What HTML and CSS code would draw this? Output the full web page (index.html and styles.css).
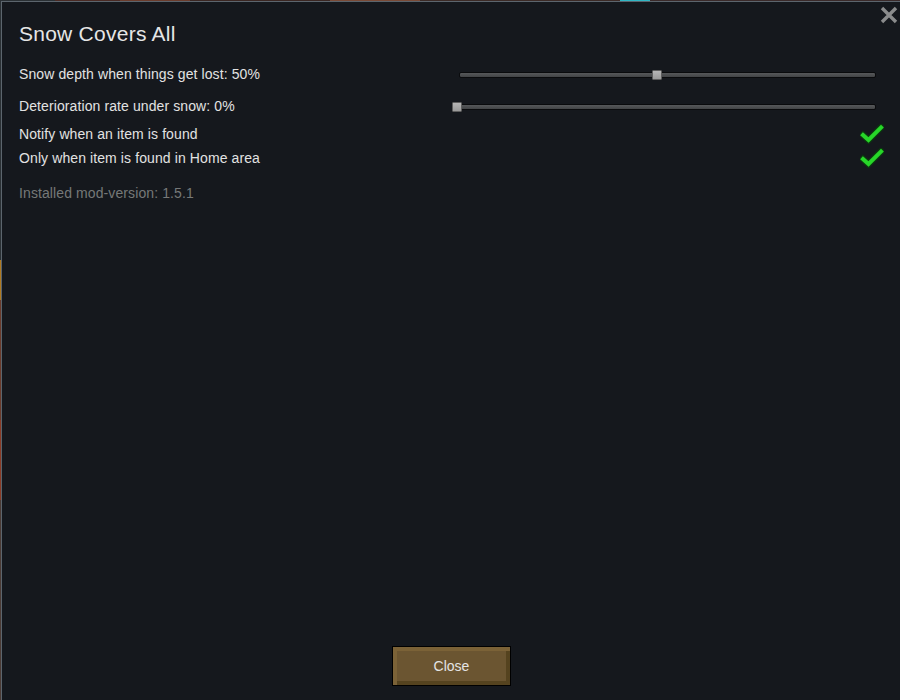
FILE: index.html
```html
<!DOCTYPE html>
<html lang="en">
<head>
<meta charset="utf-8">
<title>Mod settings</title>
<link rel="stylesheet" href="styles.css">
</head>
<body>
<div class="window">
  <button class="close-x" aria-label="Close">
    <svg width="18" height="18" viewBox="0 0 18 18"><path d="M2 2 L16 16 M16 2 L2 16" stroke="#8a8b8c" stroke-width="3.4" fill="none"/></svg>
  </button>

  <h1 class="title">Snow Covers All</h1>

  <div class="row">
    <span class="label">Snow depth when things get lost: 50%</span>
    <div class="slider">
      <div class="track"></div>
      <div class="thumb" style="left: 200px"></div>
    </div>
  </div>

  <div class="row">
    <span class="label">Deterioration rate under snow: 0%</span>
    <div class="slider">
      <div class="track"></div>
      <div class="thumb" style="left: 0px"></div>
    </div>
  </div>

  <div class="row row-check">
    <span class="label">Notify when an item is found</span>
    <svg class="check" width="24" height="20" viewBox="0 0 24 20">
      <polyline points="3,11 8.5,16 21,3.5" fill="none" stroke="#0b3a0e" stroke-width="6.5" stroke-linejoin="miter" stroke-linecap="square"/>
      <polyline points="3,11 8.5,16 21,3.5" fill="none" stroke="#27d629" stroke-width="4" stroke-linejoin="miter" stroke-linecap="square"/>
    </svg>
  </div>

  <div class="row row-check">
    <span class="label">Only when item is found in Home area</span>
    <svg class="check" width="24" height="20" viewBox="0 0 24 20">
      <polyline points="3,11 8.5,16 21,3.5" fill="none" stroke="#0b3a0e" stroke-width="6.5" stroke-linejoin="miter" stroke-linecap="square"/>
      <polyline points="3,11 8.5,16 21,3.5" fill="none" stroke="#27d629" stroke-width="4" stroke-linejoin="miter" stroke-linecap="square"/>
    </svg>
  </div>

  <p class="version">Installed mod-version: 1.5.1</p>

  <button class="btn-close">Close</button>
</div>
</body>
</html>
```

FILE: styles.css
```css
html, body {
  margin: 0;
  padding: 0;
}

body {
  width: 900px;
  height: 700px;
  overflow: hidden;
  background:
    linear-gradient(to right, #2a3034 0 55px, #4a2a24 55px 120px, #6b3c2c 120px 190px, #3a2622 190px 330px, #7a4a36 330px 420px, #3b2a26 420px 620px, #2fb7c4 620px 650px, #3a2a2a 650px 900px) top / 900px 1px no-repeat,
    linear-gradient(to bottom, #2a3034 0 260px, #b07a20 260px 300px, #6a3a2a 300px 420px, #8a3a24 420px 500px, #4a3a34 500px 700px);
  font-family: "Liberation Sans", Arial, sans-serif;
  color: #e2e2e2;
}

.window {
  position: relative;
  box-sizing: border-box;
  margin: 1px 0 0 1px;
  width: 900px;
  height: 699px;
  padding: 20px 17px 14px 17px;
  background: #15181d;
  border-top: 1px solid #5c656d;
  border-left: 1px solid #5c656d;
  display: flex;
  flex-direction: column;
}

.close-x {
  position: absolute;
  top: 4px;
  right: 3px;
  width: 18px;
  height: 18px;
  padding: 0;
  border: 0;
  background: none;
  display: block;
}

.close-x svg {
  display: block;
}

.title {
  margin: 0 0 12px 0;
  font-size: 21px;
  font-weight: normal;
  line-height: 24px;
  letter-spacing: 0.25px;
  color: #e6e6e6;
}

.row {
  display: flex;
  align-items: center;
  height: 32px;
  width: 865px;
}

.row-check {
  height: 24px;
}

.label {
  flex: 1;
  font-size: 14px;
  line-height: 16px;
  letter-spacing: 0.1px;
}

.slider {
  position: relative;
  width: 424px;
  height: 10px;
  margin: 2px 8px 0 0;
}

.track {
  position: absolute;
  left: 7px;
  right: 0;
  top: 2px;
  height: 4px;
  background: linear-gradient(to bottom, #56585a, #424446);
  border: 1px solid #0a0b0d;
  border-radius: 2px;
}

.thumb {
  position: absolute;
  top: 0;
  width: 8px;
  height: 8px;
  background: linear-gradient(to bottom, #b6b6b6, #9a9a9a);
  border: 1px solid #5e5e5e;
  border-radius: 1px;
}

.check {
  display: block;
}

.version {
  margin: 15px 0 0 0;
  font-size: 14px;
  line-height: 16px;
  letter-spacing: 0.1px;
  color: #767878;
}

.btn-close {
  margin-top: auto;
  align-self: center;
  box-sizing: border-box;
  width: 119px;
  height: 40px;
  padding: 0;
  border: 1px solid #000;
  background: #6b5531;
  box-shadow:
    inset 4px 4px 0 #7b6237,
    inset -4px -4px 0 #55431f;
  font-family: "Liberation Sans", Arial, sans-serif;
  font-size: 14px;
  color: #e4e4e4;
}
```
